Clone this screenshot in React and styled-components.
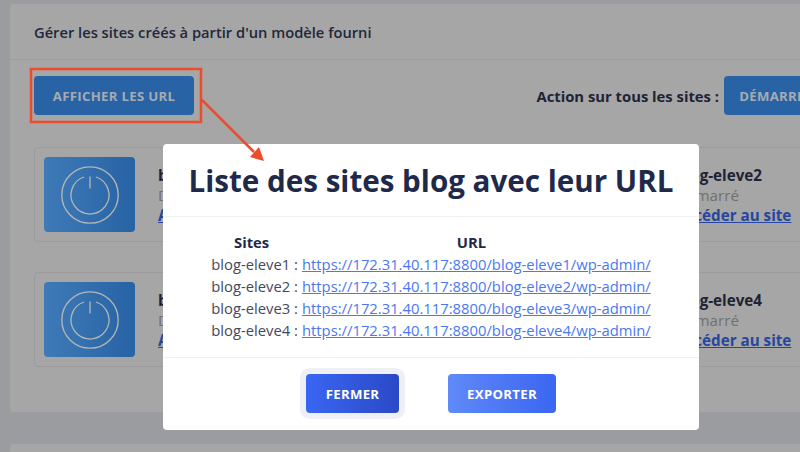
import React from 'react';
import styled, { createGlobalStyle } from 'styled-components';

const GlobalStyle = createGlobalStyle`
    html, body {
        margin: 0;
        padding: 0;
        overflow: hidden;
        background: #9b9c9f;
        font-family: "Open Sans", "Noto Sans", sans-serif;
    }
`;

const Page = styled.div`
    position: relative;
    width: 800px;
    height: 452px;
    overflow: hidden;
    background: #9b9c9f;
`;

const Stack = styled.div`
    display: flex;
    flex-direction: column;
    gap: 32px;
    width: 1100px;
    padding: 4px 0 0 10px;
`;

const Card = styled.section`
    background: #a6a6a6;
    border-radius: 3px;
    min-height: ${(props) => props.$minHeight || 100}px;
`;

const CardHeader = styled.header`
    display: flex;
    align-items: center;
    height: 55px;
    padding-left: 24px;
    border-bottom: 1px solid #9c9c9c;
    font-size: 14.7px;
    font-weight: 600;
    color: #22273a;
`;

const Toolbar = styled.div`
    display: flex;
    align-items: center;
    justify-content: space-between;
    width: 795px;
    padding: 16px 0 32px 24px;
`;

const DimButton = styled.div`
    display: flex;
    align-items: center;
    justify-content: center;
    width: ${(props) => props.$width}px;
    height: 39px;
    border-radius: 4px;
    background: #2763a5;
    color: #a6abb2;
    font-size: 13.2px;
    font-weight: 700;
    letter-spacing: 0.3px;
`;

const ToolbarActions = styled.div`
    display: flex;
    align-items: center;
    gap: 5px;
    font-size: 14.8px;
    font-weight: 700;
    color: #1d2335;
`;

const SiteGrid = styled.div`
    display: grid;
    grid-template-columns: 508px 508px;
    gap: 30px 10px;
    padding: 0 0 45px 24px;
`;

const SiteBox = styled.article`
    display: flex;
    align-items: center;
    gap: 23px;
    height: 93px;
    padding-left: 9px;
    border: 1px solid #9b9b9c;
    border-radius: 4px;
`;

const PowerTile = styled.div`
    display: flex;
    align-items: center;
    justify-content: center;
    width: 91px;
    height: 75px;
    border-radius: 4px;
    background: linear-gradient(90deg, #3f7ab7, #2763a5);
`;

const SiteInfo = styled.div`
    display: flex;
    flex-direction: column;
    font-size: 15.2px;
    line-height: 20px;
`;

const SiteName = styled.div`
    font-weight: 700;
    color: #1d2335;
`;

const SiteStatus = styled.div`
    color: #707070;
`;

const SiteLink = styled.a`
    font-weight: 700;
    color: #2746a0;
    text-decoration: underline;
`;

const Modal = styled.div`
    position: absolute;
    left: 163px;
    top: 144px;
    width: 536px;
    height: 286px;
    display: flex;
    flex-direction: column;
    background: #fff;
    border-radius: 4px;
`;

const ModalHeader = styled.h2`
    margin: 0;
    height: 73px;
    box-sizing: border-box;
    display: flex;
    align-items: center;
    justify-content: center;
    border-bottom: 1px solid #f0f1f5;
    font-size: 29.6px;
    font-weight: 700;
    color: #1f2a4a;
`;

const ModalBody = styled.div`
    height: 141px;
    box-sizing: border-box;
    display: flex;
    justify-content: center;
    padding-top: 15px;
    border-bottom: 1px solid #f0f1f5;
`;

const UrlTable = styled.table`
    align-self: flex-start;
    border-collapse: collapse;
    font-size: 14.8px;
    line-height: 22px;
    color: #434a60;

    th {
        padding: 0 10px 0 0;
        font-weight: 700;
        line-height: 21px;
        color: #1f2a4a;
        text-align: center;
    }

    td {
        padding: 0;
        white-space: nowrap;
    }

    td:first-child {
        text-align: right;
        padding-right: 4px;
    }
`;

const UrlLink = styled.a`
    color: #4a78f0;
    text-decoration: underline;
`;

const ModalFooter = styled.footer`
    display: flex;
    align-items: center;
    gap: 49px;
    padding: 16px 0 0 143px;
`;

const ModalButton = styled.button`
    height: 39px;
    width: ${(props) => props.$width}px;
    padding: 0;
    border: none;
    border-radius: 4px;
    background: ${(props) => props.$focused
        ? 'linear-gradient(90deg, #3a66f2, #2a49c6)'
        : 'linear-gradient(90deg, #6089f8, #3a66f2)'};
    box-shadow: ${(props) => props.$focused ? '0 0 0 6px #eef0f5' : 'none'};
    color: #fff;
    font-family: inherit;
    font-size: 13.2px;
    font-weight: 700;
    letter-spacing: 0.3px;
`;

const Callout = styled.svg`
    position: absolute;
    left: 0;
    top: 0;
    pointer-events: none;
`;

const sites = ['blog-eleve1', 'blog-eleve2', 'blog-eleve3', 'blog-eleve4'];

const PowerIcon = () => (
    <svg width="60" height="60" viewBox="0 0 60 60" fill="none" stroke="#b5b7b5" strokeWidth="1.3">
        <circle cx="30" cy="30" r="28.2" />
        <path d="M24 12 A19 19 0 1 0 36 12" />
        <path d="M30 11.5 V23.5" />
    </svg>
);

const App = () => (
    <Page>
        <GlobalStyle />
        <Stack>
            <Card>
                <CardHeader>Gérer les sites créés à partir d'un modèle fourni</CardHeader>
                <Toolbar>
                    <DimButton $width={160}>AFFICHER LES URL</DimButton>
                    <ToolbarActions>
                        Action sur tous les sites :
                        <DimButton $width={105}>DÉMARRER</DimButton>
                    </ToolbarActions>
                </Toolbar>
                <SiteGrid>
                    {sites.map((site) => (
                        <SiteBox key={site}>
                            <PowerTile>
                                <PowerIcon />
                            </PowerTile>
                            <SiteInfo>
                                <SiteName>{site}</SiteName>
                                <SiteStatus>Démarré</SiteStatus>
                                <SiteLink>Accéder au site</SiteLink>
                            </SiteInfo>
                        </SiteBox>
                    ))}
                </SiteGrid>
            </Card>
            <Card $minHeight={100} />
        </Stack>

        <Modal>
            <ModalHeader>Liste des sites blog avec leur URL</ModalHeader>
            <ModalBody>
                <UrlTable>
                    <thead>
                        <tr>
                            <th>Sites</th>
                            <th>URL</th>
                        </tr>
                    </thead>
                    <tbody>
                        {sites.map((site) => (
                            <tr key={site}>
                                <td>{site} :</td>
                                <td>
                                    <UrlLink>{`https://172.31.40.117:8800/${site}/wp-admin/`}</UrlLink>
                                </td>
                            </tr>
                        ))}
                    </tbody>
                </UrlTable>
            </ModalBody>
            <ModalFooter>
                <ModalButton $focused $width={93}>FERMER</ModalButton>
                <ModalButton $width={108}>EXPORTER</ModalButton>
            </ModalFooter>
        </Modal>

        <Callout width="800" height="452" viewBox="0 0 800 452" fill="none">
            <rect x="31" y="69" width="170" height="53" stroke="#ee4b2b" strokeWidth="2.5" />
            <path d="M202 100 L254 152" stroke="#ee4b2b" strokeWidth="2.5" />
            <path d="M264 161 L250 157 L259 147 Z" fill="#ee4b2b" />
        </Callout>
    </Page>
);

export default App;
